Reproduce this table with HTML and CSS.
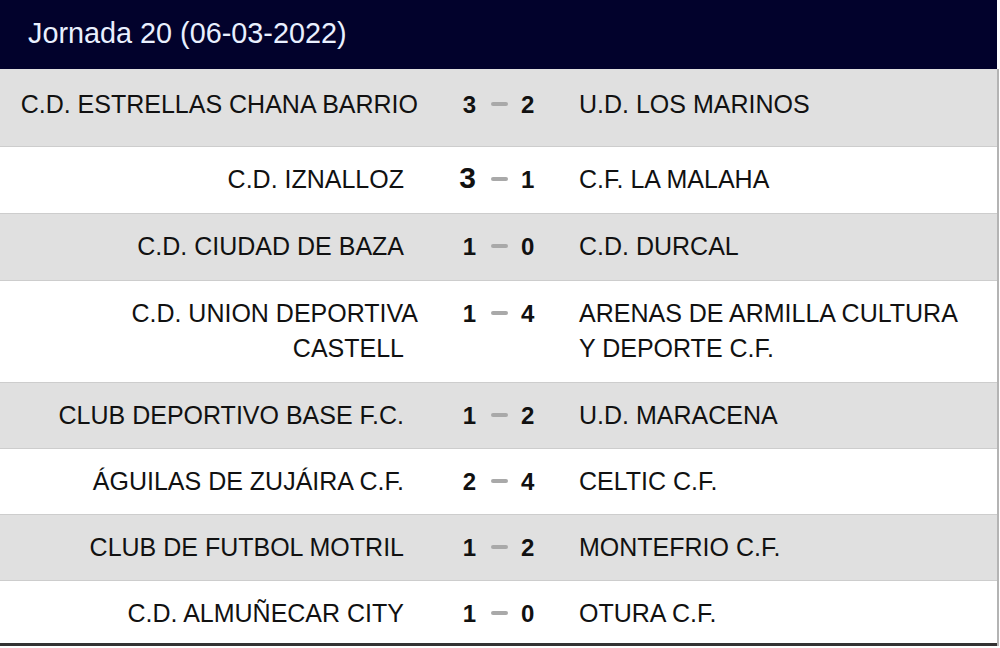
FILE: index.html
```html
<!DOCTYPE html>
<html lang="es">
<head>
<meta charset="utf-8">
<title>Jornada 20</title>
<link rel="stylesheet" href="styles.css">
</head>
<body>
<div class="results">
  <div class="head">Jornada 20 (06-03-2022)</div>
  <div class="rows">
    <div class="row alt first">
      <div class="home"><span class="name flush">C.D. ESTRELLAS CHANA BARRIO</span></div>
      <div class="score"><span class="goal g-home">3</span><span class="dash"></span><span class="goal g-away">2</span></div>
      <div class="away">U.D. LOS MARINOS</div>
    </div>
    <div class="row loose">
      <div class="home"><span class="name">C.D. IZNALLOZ</span></div>
      <div class="score"><span class="goal g-home big">3</span><span class="dash"></span><span class="goal g-away">1</span></div>
      <div class="away">C.F. LA MALAHA</div>
    </div>
    <div class="row alt loose">
      <div class="home"><span class="name">C.D. CIUDAD DE BAZA</span></div>
      <div class="score"><span class="goal g-home">1</span><span class="dash"></span><span class="goal g-away">0</span></div>
      <div class="away">C.D. DURCAL</div>
    </div>
    <div class="row tall">
      <div class="home"><span class="name flush">C.D. UNION DEPORTIVA</span><span class="name">CASTELL</span></div>
      <div class="score"><span class="goal g-home">1</span><span class="dash"></span><span class="goal g-away">4</span></div>
      <div class="away">ARENAS DE ARMILLA CULTURA Y DEPORTE C.F.</div>
    </div>
    <div class="row alt">
      <div class="home"><span class="name">CLUB DEPORTIVO BASE F.C.</span></div>
      <div class="score"><span class="goal g-home">1</span><span class="dash"></span><span class="goal g-away">2</span></div>
      <div class="away">U.D. MARACENA</div>
    </div>
    <div class="row">
      <div class="home"><span class="name">ÁGUILAS DE ZUJÁIRA C.F.</span></div>
      <div class="score"><span class="goal g-home">2</span><span class="dash"></span><span class="goal g-away">4</span></div>
      <div class="away">CELTIC C.F.</div>
    </div>
    <div class="row alt">
      <div class="home"><span class="name">CLUB DE FUTBOL MOTRIL</span></div>
      <div class="score"><span class="goal g-home">1</span><span class="dash"></span><span class="goal g-away">2</span></div>
      <div class="away">MONTEFRIO C.F.</div>
    </div>
    <div class="row last">
      <div class="home"><span class="name">C.D. ALMUÑECAR CITY</span></div>
      <div class="score"><span class="goal g-home">1</span><span class="dash"></span><span class="goal g-away">0</span></div>
      <div class="away">OTURA C.F.</div>
    </div>
  </div>
</div>
</body>
</html>
```

FILE: styles.css
```css
html, body {
  margin: 0;
  padding: 0;
  background: #ffffff;
}

body {
  font-family: "Liberation Sans", Arial, sans-serif;
  color: #111111;
}

.results {
  width: 999px;
}

.head {
  width: 997px;
  height: 69px;
  box-sizing: border-box;
  background: #02022c;
  color: #e9f0ff;
  font-size: 28.8px;
  padding: 0 0 3px 28px;
  display: flex;
  align-items: center;
}

.rows {
  border-right: 2px solid #b4b4b4;
}

.row {
  display: flex;
  align-items: baseline;
  padding: 15px 0 15px 15px;
  border-bottom: 1px solid #cdcdcd;
  background: #ffffff;
  font-size: 25px;
  line-height: 35px;
}

.row.alt {
  background: #e0e0e0;
}

.row.first {
  padding-top: 18px;
  padding-bottom: 24px;
}

.row.loose {
  padding-bottom: 16px;
}

.row.tall {
  padding-bottom: 16px;
}

.row.last {
  padding-bottom: 12px;
  border-bottom: 3px solid #333333;
}

.home {
  width: 403px;
  flex: none;
  text-align: right;
}

.name {
  display: block;
  padding-right: 14px;
}

.name.flush {
  padding-right: 0;
}

.score {
  width: 161px;
  flex: none;
  text-align: center;
  font-size: 24px;
  line-height: 31px;
  font-weight: bold;
  white-space: nowrap;
}

.goal {
  display: inline-block;
  width: 40px;
}

.g-home {
  text-align: right;
}

.g-away {
  text-align: left;
}

.goal.big {
  font-size: 30px;
}

.dash {
  display: inline-block;
  width: 17px;
  height: 4px;
  border-radius: 2px;
  background: #a9a9a9;
  margin: 0 13px 7px 15px;
}

.away {
  width: 400px;
  flex: none;
  text-align: left;
}
```
